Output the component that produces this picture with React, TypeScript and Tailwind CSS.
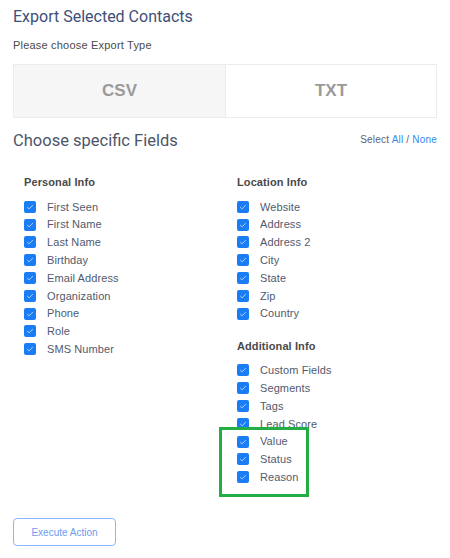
import React from "react";

const personal = ["First Seen", "First Name", "Last Name", "Birthday", "Email Address", "Organization", "Phone", "Role", "SMS Number"];
const location = ["Website", "Address", "Address 2", "City", "State", "Zip", "Country"];
const additional = ["Custom Fields", "Segments", "Tags", "Lead Score", "Value", "Status", "Reason"];

function CheckItem({ label }: { label: string }) {
  return (
    <div className="flex h-[17.8px] items-center">
      <span className="flex h-3 w-3 items-center justify-center rounded-[2px] bg-[#1a7df5]">
        <svg viewBox="0 0 12 12" className="h-3 w-3" fill="none" stroke="#b9d6fb" strokeWidth="0.9" strokeLinecap="round" strokeLinejoin="round">
          <path d="M3.4 6.2 5.1 7.9 8.6 4.3" />
        </svg>
      </span>
      <span className="ml-[11px] text-[11px] tracking-[0.1px] text-[#515a6e]">{label}</span>
    </div>
  );
}

function Group({ title, items }: { title: string; items: string[] }) {
  return (
    <div>
      <div className="h-[18px] text-[11px] font-bold leading-[18px] tracking-[0.1px] text-[#4a4a4a]">{title}</div>
      <div className="mt-[7px]">
        {items.map((i) => (
          <CheckItem key={i} label={i} />
        ))}
      </div>
    </div>
  );
}

export default function App() {
  return (
    <div className="relative h-[558px] w-[450px] bg-white px-[13px] font-['Liberation_Sans',Arial,sans-serif]">
      <h1 className="pt-[7px] font-['Roboto',sans-serif] text-[16px] leading-[20px] text-[#3d5077]">Export Selected Contacts</h1>
      <p className="mt-[11px] text-[11px] leading-[14px] tracking-[0.2px] text-[#4a4a4a]">Please choose Export Type</p>

      <div className="mt-[12px] grid h-[54px] grid-cols-2 border border-[#ececec]">
        <button className="flex items-center justify-center bg-[#f6f6f6] text-[17px] font-bold text-[#9a9a9a]">CSV</button>
        <button className="flex items-center justify-center border-l border-[#ececec] bg-white text-[17px] font-bold text-[#9a9a9a]">TXT</button>
      </div>

      <div className="mt-[12px] flex items-center justify-between">
        <h2 className="font-['Roboto',sans-serif] text-[16.5px] leading-[22px] text-[#4c5568]">Choose specific Fields</h2>
        <div className="pb-[4px] text-[10px] tracking-[0.2px] text-[#5b6478]">
          Select <span className="text-[#2f8cf0]">All</span> / <span className="text-[#2f8cf0]">None</span>
        </div>
      </div>

      <div className="mt-[21px] grid grid-cols-2">
        <div className="pl-[11px]">
          <Group title="Personal Info" items={personal} />
        </div>
        <div className="pl-[12px]">
          <Group title="Location Info" items={location} />
          <div className="mt-[14px]">
            <Group title="Additional Info" items={additional} />
          </div>
        </div>
      </div>

      <button className="mt-[32px] h-[28px] w-[103px] rounded-[4px] border border-[#8bb8f6] text-[10px] text-[#6c9cf0]">Execute Action</button>

      <div className="absolute left-[219px] top-[427px] h-[70px] w-[90px] border-[3px] border-[#22ad45]" />
    </div>
  );
}
